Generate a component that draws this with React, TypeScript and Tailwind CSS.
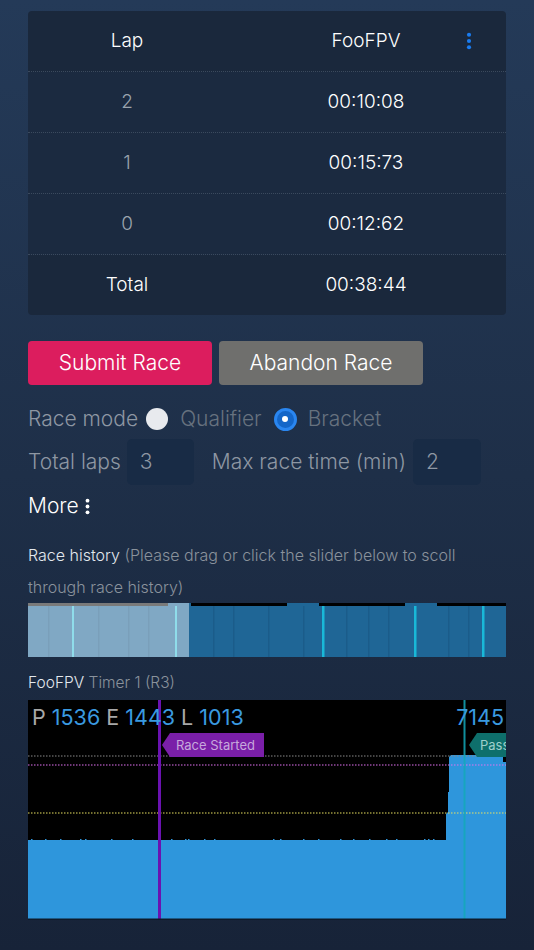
import React from 'react';

const laps = [
    { lap: '2', time: '00:10:08' },
    { lap: '1', time: '00:15:73' },
    { lap: '0', time: '00:12:62' },
];

const DotsIcon = ({ className }: { className?: string }) => (
    <svg viewBox="0 0 6 20" className={className}>
        <circle cx="3" cy="3" r="2.3" fill="currentColor" />
        <circle cx="3" cy="10" r="2.3" fill="currentColor" />
        <circle cx="3" cy="17" r="2.3" fill="currentColor" />
    </svg>
);

const HistoryBar = () => {
    const faint = [20, 70, 100, 120, 185, 205, 240, 275, 318, 340, 360, 420, 440];
    return (
        <svg viewBox="0 0 478 54" preserveAspectRatio="none" className="block w-full h-[54px]">
            <rect x="0" y="0" width="478" height="54" fill="#1f6696" />
            <rect x="0" y="0" width="161" height="54" fill="#80a8c4" />
            <rect x="0" y="0" width="140" height="3" fill="#7a7a7a" />
            {faint.map((x) => (
                <rect key={x} x={x} y="3" width="1.5" height="51" fill={x < 161 ? '#7a9fba' : '#1b5c8a'} />
            ))}
            <rect x="44" y="3" width="2" height="51" fill="#8fdcea" />
            <rect x="147" y="3" width="2" height="51" fill="#8fdcea" />
            <rect x="294" y="3" width="2.5" height="51" fill="#19b8d8" />
            <rect x="386" y="3" width="2.5" height="51" fill="#19b8d8" />
            <rect x="454" y="3" width="2.5" height="51" fill="#19b8d8" />
            <rect x="163" y="0" width="96" height="3" fill="#000" />
            <rect x="291" y="0" width="86" height="3" fill="#000" />
            <rect x="409" y="0" width="69" height="3" fill="#000" />
        </svg>
    );
};

const SignalChart = () => {
    const bumps = [3, 17, 32, 52, 57, 83, 104, 143, 157, 160, 176, 186, 245, 252, 275, 290, 312, 325, 341, 358, 368, 396, 400, 405];
    return (
        <svg viewBox="0 0 478 220" className="block w-full h-[220px]">
            <rect x="0" y="0" width="478" height="220" fill="#000" />
            <path d="M0 140 L418 140 L418 114 L420 112 L420 92 L421 92 L421 57 L423 55 L475 55 L475 62 L478 62 L478 220 L0 220 Z" fill="#2e96dc" />
            {bumps.map((x) => (
                <rect key={x} x={x} y="139" width="1.5" height="1.5" fill="#2e96dc" />
            ))}
            <line x1="0" y1="56" x2="478" y2="56" stroke="#8a8a8a" strokeWidth="1" strokeDasharray="1.5 1.5" />
            <line x1="0" y1="65" x2="478" y2="65" stroke="#e070f0" strokeWidth="1" strokeDasharray="1.5 1.5" />
            <line x1="0" y1="113" x2="478" y2="113" stroke="#e8e060" strokeWidth="1" strokeDasharray="1.5 1.5" />
            <rect x="130" y="0" width="3" height="220" fill="#6a12b0" />
            <rect x="435.5" y="0" width="2" height="220" fill="#13a8b8" opacity="0.85" />
            <path d="M134 45 L142 33 L236 33 L236 57 L142 57 Z" fill="#7a1fa8" />
            <text x="148" y="50" fontSize="13" fill="#c7a8dc" fontFamily="Inter, 'Noto Sans', sans-serif">Race Started</text>
            <path d="M441 45 L449 33 L478 33 L478 57 L449 57 Z" fill="#0e6f6b" />
            <text x="452" y="50" fontSize="13" fill="#9fd0cc" fontFamily="Inter, 'Noto Sans', sans-serif">Pass</text>
            <text x="4" y="25" fontSize="21.5" fontFamily="Inter, 'Noto Sans', sans-serif">
                <tspan fill="#a8a8a8">P </tspan>
                <tspan fill="#3a9ae0">1536 </tspan>
                <tspan fill="#a8a8a8">E </tspan>
                <tspan fill="#3a9ae0">1443 </tspan>
                <tspan fill="#a8a8a8">L </tspan>
                <tspan fill="#3a9ae0">1013</tspan>
            </text>
            <text x="476" y="25" fontSize="21.5" textAnchor="end" fill="#3a9ae0" fontFamily="Inter, 'Noto Sans', sans-serif">7145</text>
            <rect x="0" y="218.5" width="478" height="1.5" fill="#0d1a2a" />
        </svg>
    );
};

export default function App() {
    return (
        <div
            className="min-h-[950px] w-full bg-gradient-to-b from-[#243a58] via-[#1e2f48] to-[#172338] px-[28px] pt-[11px] pb-[20px] text-white"
            style={{ fontFamily: "Inter, 'Noto Sans', 'Liberation Sans', sans-serif" }}
        >
            <div className="bg-[#1a283c] rounded-[4px] overflow-hidden font-light">
                <div className="flex h-[61px] items-center border-b border-dotted border-[#3b4a5e]">
                    <div className="w-[198px] text-center text-[19px]">Lap</div>
                    <div className="flex-1 relative text-center text-[19px]">
                        FooFPV
                        <DotsIcon className="absolute right-[34px] top-1/2 -translate-y-1/2 w-[6px] h-[18px] text-[#1a7cf0]" />
                    </div>
                </div>
                {laps.map((row) => (
                    <div key={row.lap} className="flex h-[61px] items-center border-b border-dotted border-[#3b4a5e] bg-[#1b2a40]">
                        <div className="w-[198px] text-center text-[19px] text-[#9aa3ad]">{row.lap}</div>
                        <div className="flex-1 text-center text-[19px]">{row.time}</div>
                    </div>
                ))}
                <div className="flex h-[60px] items-center">
                    <div className="w-[198px] text-center text-[19px]">Total</div>
                    <div className="flex-1 text-center text-[19px]">00:38:44</div>
                </div>
            </div>

            <div className="flex gap-[7px] mt-[26px]">
                <button className="w-[184px] h-[44px] rounded-[4px] bg-[#dc1d5e] text-[21px] font-light text-white">Submit Race</button>
                <button className="w-[204px] h-[44px] rounded-[4px] bg-[#6f6f6d] text-[21px] font-light text-white">Abandon Race</button>
            </div>

            <div className="flex items-center h-[30px] mt-[19px] text-[21px] font-light">
                <span className="text-[#8e97a3]">Race mode</span>
                <span className="ml-[8px] w-[22px] h-[22px] rounded-full bg-[#e8eaee]" />
                <span className="ml-[12px] text-[#67727f]">Qualifier</span>
                <span className="ml-[12px] w-[23px] h-[23px] rounded-full bg-[#1466c8] border-[3px] border-[#2a86f0] flex items-center justify-center">
                    <span className="w-[6px] h-[6px] rounded-full bg-white" />
                </span>
                <span className="ml-[11px] text-[#67727f]">Bracket</span>
            </div>

            <div className="flex items-center mt-[5px] text-[21px] font-light">
                <span className="text-[#8e97a3]">Total laps</span>
                <div className="ml-[6px] w-[67px] h-[46px] rounded-[5px] bg-[#182b45] flex items-center pl-[13px] text-[#8e97a3]">3</div>
                <span className="ml-[18px] text-[#8e97a3]">Max race time (min)</span>
                <div className="ml-[7px] w-[68px] h-[46px] rounded-[5px] bg-[#182b45] flex items-center pl-[13px] text-[#8e97a3]">2</div>
            </div>

            <div className="flex items-center mt-[7px] h-[28px] text-[21px] font-light">
                <span>More</span>
                <DotsIcon className="ml-[6px] w-[5px] h-[17px] text-white" />
            </div>

            <div className="mt-[19px] text-[16px] leading-[32px] font-light">
                <span className="text-[#e3e8ee]">Race history </span>
                <span className="text-[#8a929c]">(Please drag or click the slider below to scoll through race history)</span>
            </div>

            <HistoryBar />

            <div className="mt-[16px] text-[15.5px] leading-[20px] font-light">
                <span className="text-[#e3e8ee]">FooFPV </span>
                <span className="text-[#8a929c]">Timer 1 (R3)</span>
            </div>

            <div className="mt-[7px]">
                <SignalChart />
            </div>
        </div>
    );
}
